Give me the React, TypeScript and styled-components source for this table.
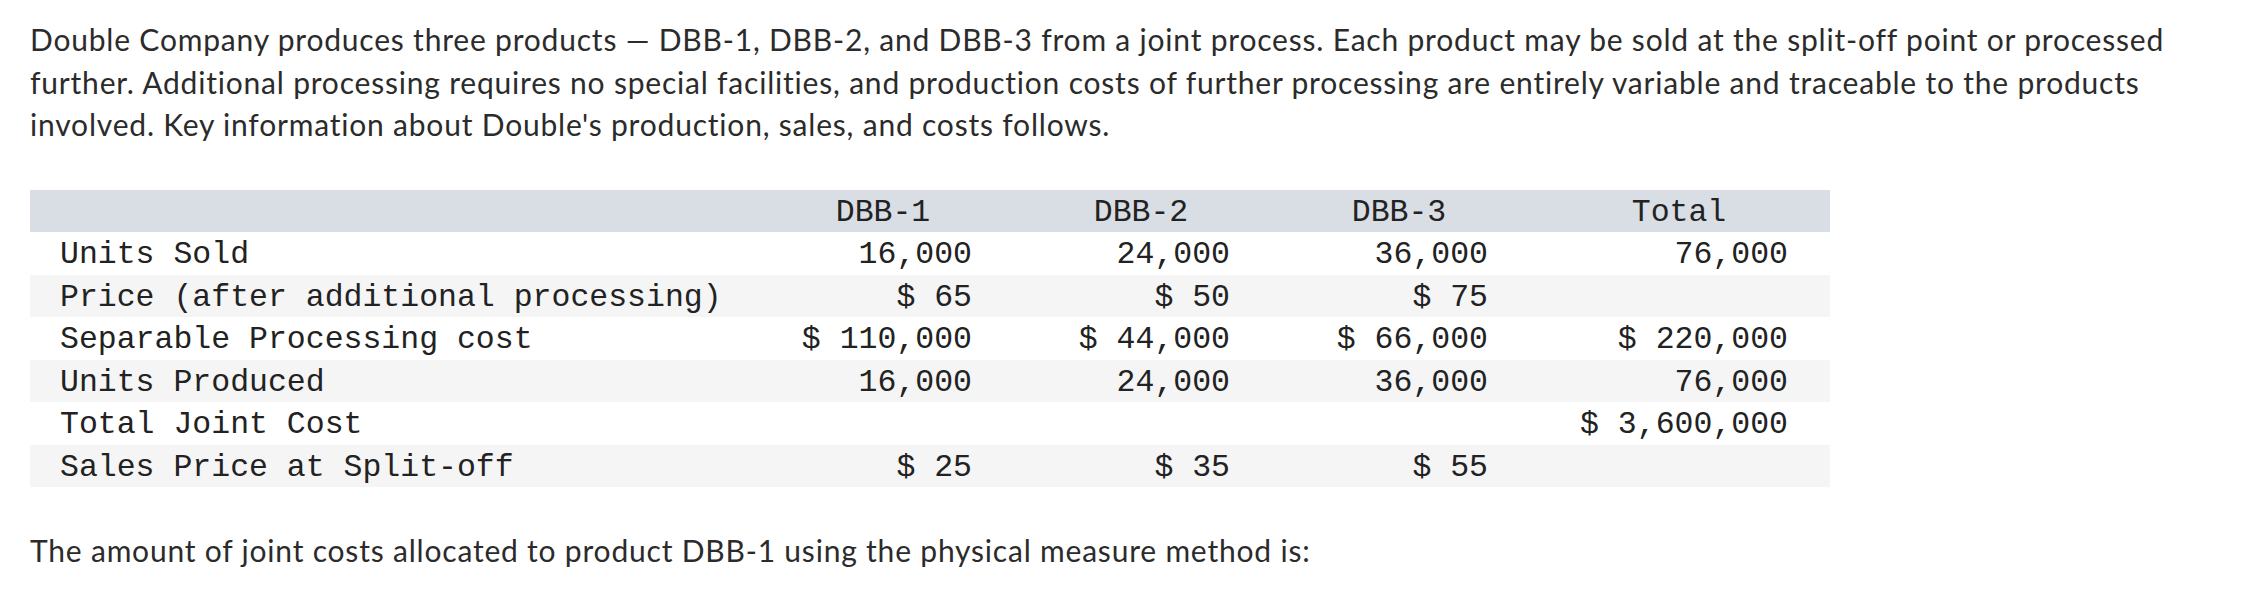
import React from 'react';
import styled, { createGlobalStyle } from 'styled-components';

const GlobalStyle = createGlobalStyle`
  html, body {
    margin: 0;
    padding: 0;
    background: #fff;
  }
`;

const Page = styled.div`
  padding: 18px 30px 0 30px;
  font-family: Lato, 'Open Sans', sans-serif;
  color: #2b2b2b;
`;

const Para = styled.p`
  margin: 0;
  font-size: 30px;
  letter-spacing: 0.8px;
  line-height: 42.5px;
  max-width: 2170px;
`;

const Question = styled(Para)`
  margin-top: 42px;
`;

const DataTable = styled.table`
  margin-top: 44px;
  width: 1800px;
  border-collapse: collapse;
  table-layout: fixed;
  font-family: 'Liberation Mono', 'Courier New', monospace;
  font-size: 31.5px;
  color: #222;
`;

const HeadRow = styled.tr`
  background: #d9dde4;
`;

const Row = styled.tr<{ striped: boolean }>`
  background: ${props => (props.striped ? '#f5f5f5' : '#ffffff')};
`;

// 单元格文字比默认位置略低一点
const Th = styled.th<{ wide?: boolean }>`
  height: 39.5px;
  padding: 3px 0 0 0;
  font-weight: normal;
  text-align: center;
  width: ${props => (props.wide ? '302px' : '258px')};
`;

const LabelTh = styled.th`
  width: 724px;
  padding: 0;
`;

const Label = styled.td`
  height: 39.5px;
  padding: 3px 0 0 30px;
  white-space: pre;
`;

const Num = styled.td<{ wide?: boolean }>`
  height: 39.5px;
  padding: 3px ${props => (props.wide ? '42px' : '40px')} 0 0;
  text-align: right;
  white-space: pre;
`;

// 每行：标签 + 三个产品 + 合计
const rows: string[][] = [
  ['Units Sold', '16,000', '24,000', '36,000', '76,000'],
  ['Price (after additional processing)', '$ 65', '$ 50', '$ 75', ''],
  ['Separable Processing cost', '$ 110,000', '$ 44,000', '$ 66,000', '$ 220,000'],
  ['Units Produced', '16,000', '24,000', '36,000', '76,000'],
  ['Total Joint Cost', '', '', '', '$ 3,600,000'],
  ['Sales Price at Split-off', '$ 25', '$ 35', '$ 55', ''],
];

export default function App() {
  return (
    <>
      <GlobalStyle />
      <Page>
        <Para>
          Double Company produces three products — DBB-1, DBB-2, and DBB-3 from a joint process. Each
          product may be sold at the split-off point or processed further. Additional processing
          requires no special facilities, and production costs of further processing are entirely
          variable and traceable to the products involved. Key information about Double's
          production, sales, and costs follows.
        </Para>
        <DataTable>
          <thead>
            <HeadRow>
              <LabelTh />
              <Th>DBB-1</Th>
              <Th>DBB-2</Th>
              <Th>DBB-3</Th>
              <Th wide>Total</Th>
            </HeadRow>
          </thead>
          <tbody>
            {rows.map((r, i) => (
              <Row key={r[0]} striped={i % 2 === 1}>
                <Label>{r[0]}</Label>
                <Num>{r[1]}</Num>
                <Num>{r[2]}</Num>
                <Num>{r[3]}</Num>
                <Num wide>{r[4]}</Num>
              </Row>
            ))}
          </tbody>
        </DataTable>
        <Question>
          The amount of joint costs allocated to product DBB-1 using the physical measure method is:
        </Question>
      </Page>
    </>
  );
}
